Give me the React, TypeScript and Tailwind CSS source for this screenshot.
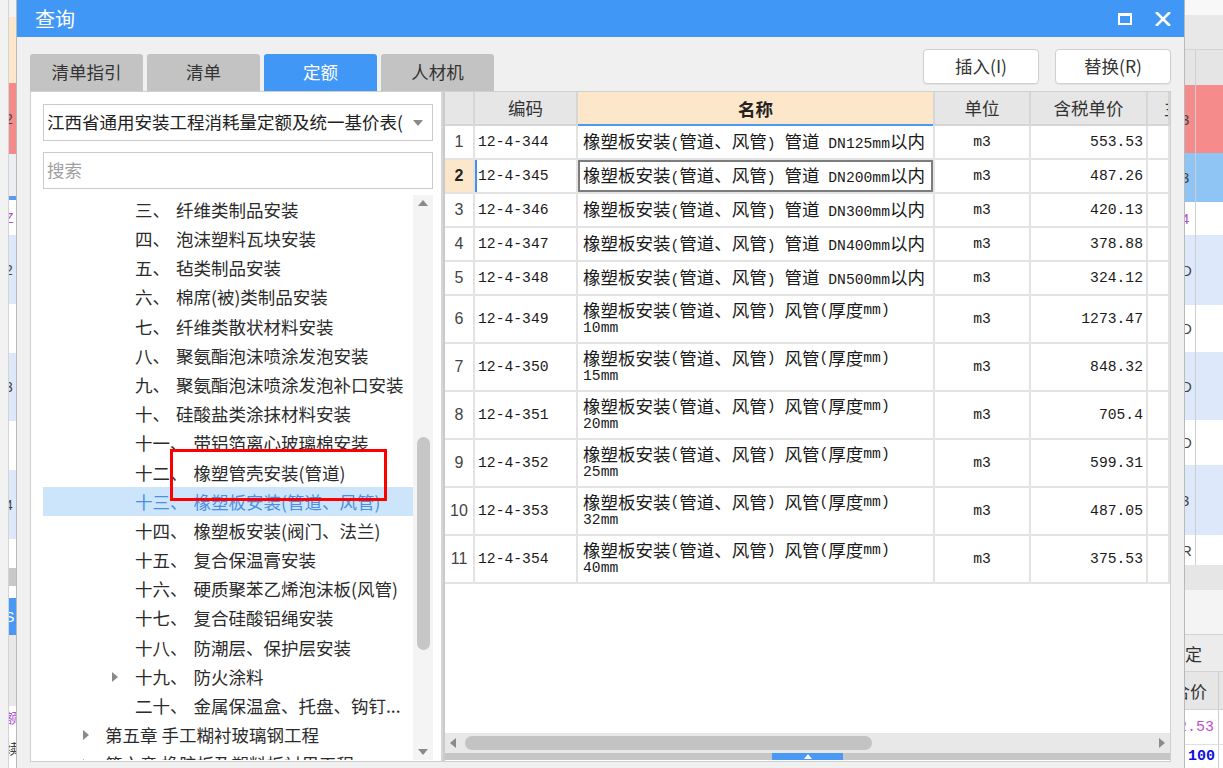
import React from 'react';

type Row = { code: string; name: string; sub?: string; unit: string; price: string };

const rows: Row[] = [
  { code: '12-4-344', name: '橡塑板安装(管道、风管) 管道 DN125mm以内', unit: 'm3', price: '553.53' },
  { code: '12-4-345', name: '橡塑板安装(管道、风管) 管道 DN200mm以内', unit: 'm3', price: '487.26' },
  { code: '12-4-346', name: '橡塑板安装(管道、风管) 管道 DN300mm以内', unit: 'm3', price: '420.13' },
  { code: '12-4-347', name: '橡塑板安装(管道、风管) 管道 DN400mm以内', unit: 'm3', price: '378.88' },
  { code: '12-4-348', name: '橡塑板安装(管道、风管) 管道 DN500mm以内', unit: 'm3', price: '324.12' },
  { code: '12-4-349', name: '橡塑板安装(管道、风管) 风管(厚度mm)', sub: '10mm', unit: 'm3', price: '1273.47' },
  { code: '12-4-350', name: '橡塑板安装(管道、风管) 风管(厚度mm)', sub: '15mm', unit: 'm3', price: '848.32' },
  { code: '12-4-351', name: '橡塑板安装(管道、风管) 风管(厚度mm)', sub: '20mm', unit: 'm3', price: '705.4' },
  { code: '12-4-352', name: '橡塑板安装(管道、风管) 风管(厚度mm)', sub: '25mm', unit: 'm3', price: '599.31' },
  { code: '12-4-353', name: '橡塑板安装(管道、风管) 风管(厚度mm)', sub: '32mm', unit: 'm3', price: '487.05' },
  { code: '12-4-354', name: '橡塑板安装(管道、风管) 风管(厚度mm)', sub: '40mm', unit: 'm3', price: '375.53' },
];

type TreeItem = { label?: string; text: string; chapter?: boolean; arrow?: boolean; selected?: boolean };

const tree: TreeItem[] = [
  { label: '三、', text: '纤维类制品安装' },
  { label: '四、', text: '泡沫塑料瓦块安装' },
  { label: '五、', text: '毡类制品安装' },
  { label: '六、', text: '棉席(被)类制品安装' },
  { label: '七、', text: '纤维类散状材料安装' },
  { label: '八、', text: '聚氨酯泡沫喷涂发泡安装' },
  { label: '九、', text: '聚氨酯泡沫喷涂发泡补口安装' },
  { label: '十、', text: '硅酸盐类涂抹材料安装' },
  { label: '十一、', text: '带铝箔离心玻璃棉安装' },
  { label: '十二、', text: '橡塑管壳安装(管道)' },
  { label: '十三、', text: '橡塑板安装(管道、风管)', selected: true },
  { label: '十四、', text: '橡塑板安装(阀门、法兰)' },
  { label: '十五、', text: '复合保温膏安装' },
  { label: '十六、', text: '硬质聚苯乙烯泡沫板(风管)' },
  { label: '十七、', text: '复合硅酸铝绳安装' },
  { label: '十八、', text: '防潮层、保护层安装' },
  { label: '十九、', text: '防火涂料', arrow: true },
  { label: '二十、', text: '金属保温盒、托盘、钩钉...' },
  { text: '第五章 手工糊衬玻璃钢工程', chapter: true, arrow: true },
  { text: '第六章 橡胶板及塑料板衬里工程', chapter: true, arrow: true },
];

// background app peeking out on the left
const leftBlocks = [
  { cls: 'h-[17px] bg-[#f3f3f3]' },
  { cls: 'h-[66px] bg-[#fde7cc]' },
  { cls: 'h-[71px] bg-[#f48a8a]', t: '2' },
  { cls: 'h-[42px] bg-[#eceef3]', t: '·' },
  { cls: 'h-[4px] bg-[#5a9bf0]' },
  { cls: 'h-[35px] bg-white', t: 'Z', c: 'text-[#b04fd0]' },
  { cls: 'h-[69px] bg-[#dde9fb]', t: '2' },
  { cls: 'h-[49px] bg-white' },
  { cls: 'h-[68px] bg-[#dde9fb]', t: '3' },
  { cls: 'h-[49px] bg-white' },
  { cls: 'h-[69px] bg-[#dde9fb]', t: '4' },
  { cls: 'h-[29px] bg-white' },
  { cls: 'h-[18px] bg-[#c8c8c8]' },
  { cls: 'h-[12px] bg-white' },
  { cls: 'h-[37px] bg-[#4a98f5]', t: 'S', c: 'text-white' },
  { cls: 'h-[71px] bg-[#e8e8e8]' },
  { cls: 'h-[24px] bg-white', t: '额', c: 'text-[#b04fd0]' },
  { cls: 'flex-1 bg-white', t: '续' },
];

const rightBlocks = [
  { cls: 'h-[15px] bg-[#f8f8f8]' },
  { cls: 'h-[35px] bg-[#e8e8e8] border-b border-[#d4d4d4]' },
  { cls: 'h-[35px] bg-[#e5e5e5]', line: true },
  { cls: 'h-[68px] bg-[#f68b8b]', line: true, t: '3' },
  { cls: 'h-[49px] bg-[#8fc5f5]', line: true, t: '3' },
  { cls: 'h-[33px] bg-white', line: true, t: '4', c: 'text-[#b04fd0]' },
  { cls: 'h-[70px] bg-[#dde9fb]', line: true, t: 'D' },
  { cls: 'h-[47px] bg-white', line: true, t: 'D' },
  { cls: 'h-[68px] bg-[#dde9fb]', line: true, t: 'D' },
  { cls: 'h-[45px] bg-white', line: true, t: 'D' },
  { cls: 'h-[70px] bg-[#dde9fb]', line: true, t: '3' },
  { cls: 'h-[30px] bg-white', line: true, t: 'R' },
  { cls: 'h-[25px] bg-[#e6e6e6]' },
  { cls: 'h-[45px] bg-[#f4f4f4] border-b border-[#d4d4d4]' },
];

function Mixed({ text }: { text: string }) {
  const parts = text.split(/([\x20-\x7e]+)/).filter(Boolean);
  return (
    <>
      {parts.map((p, i) =>
        /^[\x20-\x7e]+$/.test(p) ? (
          <span key={i} className="font-['Liberation_Mono',monospace] text-[14.7px] whitespace-pre">{p}</span>
        ) : (
          <span key={i}>{p}</span>
        )
      )}
    </>
  );
}

function Caret({ dir }: { dir: 'up' | 'down' | 'left' | 'right' }) {
  const pts = {
    up: '0,6 5,0 10,6',
    down: '0,0 10,0 5,6',
    left: '6,0 6,10 0,5',
    right: '0,0 6,5 0,10',
  }[dir];
  const vb = dir === 'up' || dir === 'down' ? '0 0 10 6' : '0 0 6 10';
  const size = dir === 'up' || dir === 'down' ? 'w-[10px] h-[6px]' : 'w-[6px] h-[10px]';
  return (
    <svg viewBox={vb} className={size}>
      <polygon points={pts} fill="#8a8a8a" />
    </svg>
  );
}

function LeftStrip() {
  return (
    <div className="w-[16px] shrink-0 flex">
      <div className="w-[9px] bg-[#f2f2f2] border-r border-[#d4d4d4]" />
      <div className="w-[7px] flex flex-col">
        {leftBlocks.map((b, i) => (
          <div key={i} className={`${b.cls} flex items-center overflow-hidden`}>
            {b.t && (
              <span className={`-ml-[4px] text-[14px] leading-none font-['Liberation_Sans','Noto_Sans_CJK_SC',sans-serif] ${b.c ?? 'text-[#444]'}`}>
                {b.t}
              </span>
            )}
          </div>
        ))}
      </div>
    </div>
  );
}

function RightStrip() {
  return (
    <div className="w-[38px] shrink-0 flex flex-col bg-white">
      {rightBlocks.map((b, i) => (
        <div key={i} className={`${b.cls} flex`}>
          <div className={`w-[11px] flex items-center overflow-hidden ${b.line ? 'border-r border-[#cfcfcf]' : ''}`}>
            {b.t && (
              <span className={`-ml-[4px] text-[15px] leading-none font-['Liberation_Sans',sans-serif] ${b.c ?? 'text-[#444]'}`}>
                {b.t}
              </span>
            )}
          </div>
          <div className="flex-1" />
        </div>
      ))}
      <div className="h-[37px] bg-[#ececec] flex items-center border-b border-[#d4d4d4]">
        <span className="text-[17px] text-[#333] leading-none">定</span>
      </div>
      <div className="h-[38px] bg-[#e6e6e6] flex items-center overflow-hidden border-b border-[#d4d4d4]">
        <span className="-ml-[12px] text-[17px] text-[#333] leading-none whitespace-nowrap">合价</span>
        <div className="ml-auto h-full border-l border-[#cfcfcf] w-[5px]" />
      </div>
      <div className="h-[35px] bg-white flex items-center overflow-hidden border-b border-[#e0e0e0]">
        <span className="-ml-[7px] text-[15px] text-[#c04fd0] leading-none font-['Liberation_Mono',monospace] whitespace-nowrap">2.53</span>
        <div className="ml-auto h-full border-l border-[#cfcfcf] w-[5px]" />
      </div>
      <div className="flex-1 bg-white flex items-center overflow-hidden">
        <span className="ml-[3px] text-[15px] font-bold text-[#1010e0] leading-none font-['Liberation_Mono',monospace]">100</span>
        <div className="ml-auto h-full border-l border-[#cfcfcf] w-[5px]" />
      </div>
    </div>
  );
}

function TitleBar() {
  return (
    <div className="h-[37px] shrink-0 bg-[#4197f6] flex items-center pl-[18px] pr-[13px]">
      <span className="text-white text-[20px] leading-none">查询</span>
      <div className="ml-auto flex items-center gap-[23px]">
        <svg viewBox="0 0 14 12" className="w-[14px] h-[12px]">
          <rect x="1" y="1.5" width="12" height="9.5" fill="none" stroke="white" strokeWidth="2" />
          <rect x="0" y="0" width="14" height="3" fill="white" />
        </svg>
        <svg viewBox="0 0 16 14" className="w-[16px] h-[14px]">
          <path d="M2 1 L14 13 M14 1 L2 13" stroke="white" strokeWidth="2.6" strokeLinecap="square" />
        </svg>
      </div>
    </div>
  );
}

function Tabs() {
  const tabs = ['清单指引', '清单', '定额', '人材机'];
  return (
    <div className="flex gap-[4px]">
      {tabs.map((t) => (
        <div
          key={t}
          className={`w-[113px] h-[37px] rounded-t-[3px] flex items-center justify-center text-[17.5px] ${
            t === '定额' ? 'bg-[#4197f6] text-white' : 'bg-[#c3c3c3] text-[#333]'
          }`}
        >
          {t}
        </div>
      ))}
    </div>
  );
}

function TreePanel() {
  return (
    <div className="w-[412px] shrink-0 flex flex-col pl-[12px] pr-[8px] pt-[12px] pb-[1px] border-r-2 border-[#d6d6d6]">
      <div className="h-[37px] shrink-0 border border-[#cacaca] flex items-center bg-white">
        <div className="flex-1 overflow-hidden whitespace-nowrap pl-[3px] text-[17.5px] text-[#222]">
          江西省通用安装工程消耗量定额及统一基价表(2017)
        </div>
        <div className="w-[29px] flex items-center justify-center">
          <Caret dir="down" />
        </div>
      </div>
      <div className="mt-[11px] h-[37px] shrink-0 border border-[#cacaca] flex items-center pl-[3px] text-[17.5px] text-[#a0a0a0]">
        搜索
      </div>
      <div className="mt-[6px] flex-1 flex overflow-hidden">
        <div className="w-[370px] flex flex-col">
          {tree.map((it, i) => (
            <div
              key={i}
              className={`h-[29.2px] shrink-0 flex items-center whitespace-nowrap text-[17.5px] leading-none ${
                it.chapter ? 'pl-[40px]' : 'pl-[69px]'
              } ${it.selected ? 'bg-[#cce5fb] text-[#4a8fe3]' : 'text-[#2b2b2b]'}`}
            >
              <span className={`${it.chapter ? 'w-[22px]' : 'w-[23px]'} flex items-center`}>
                {it.arrow && <Caret dir="right" />}
              </span>
              {it.label && <span>{it.label}</span>}
              <span className={it.label ? 'ml-[6px]' : ''}>{it.text}</span>
            </div>
          ))}
        </div>
        <div className="w-[20px] flex flex-col items-center bg-[#f4f4f4]">
          <div className="h-[16px] flex items-center"><Caret dir="up" /></div>
          <div className="h-[226px]" />
          <div className="w-[13px] h-[213px] rounded-full bg-[#c6c6c6]" />
          <div className="flex-1" />
          <div className="h-[16px] flex items-center"><Caret dir="down" /></div>
        </div>
      </div>
    </div>
  );
}

function TablePanel() {
  const cell = 'border-r-2 border-b-2 border-[#e3e3e3]';
  const head = 'border-r-2 border-b-2 border-[#d6d6d6] bg-[#e6e6e6] flex items-center justify-center text-[17.5px] text-[#333]';
  return (
    <div className="flex-1 flex flex-col border-l-2 border-[#cacaca] min-w-0">
      <div className="grid grid-cols-[30px_103px_357px_96px_117px_1fr] overflow-hidden">
        <div className={`${head} h-[34px] bg-[#e0e0e0]`} />
        <div className={`${head} h-[34px]`}>编码</div>
        <div className="h-[34px] border-r-2 border-[#d6d6d6] bg-[#fde7ca] flex items-center justify-center text-[17.5px] font-bold text-[#222] shadow-[inset_0_-2px_0_#4a9af5]">
          名称
        </div>
        <div className={`${head} h-[34px]`}>单位</div>
        <div className={`${head} h-[34px]`}>含税单价</div>
        <div className={`${head} h-[34px] justify-start overflow-hidden`}>
          <span className="ml-[16px] whitespace-nowrap">主材</span>
        </div>

        {rows.map((r, i) => {
          const h = r.sub ? 'h-[48px]' : 'h-[34px]';
          const sel = i === 1;
          return (
            <React.Fragment key={r.code}>
              <div
                className={`${cell} ${h} flex items-center justify-center font-['Liberation_Sans',sans-serif] text-[16px] ${
                  sel ? 'bg-[#fde7ca] font-bold text-[#222]' : 'text-[#444]'
                }`}
              >
                {i + 1}
              </div>
              <div
                className={`${cell} ${h} flex items-center pl-[3px] text-[#1a1a1a] ${
                  sel ? 'shadow-[inset_2px_0_0_#4a90e2]' : ''
                }`}
              >
                <Mixed text={r.code} />
              </div>
              <div
                className={`${cell} ${h} flex flex-col justify-center pl-[5px] text-[17.5px] text-[#1a1a1a] whitespace-nowrap overflow-hidden leading-[18px] ${
                  sel ? 'shadow-[inset_0_0_0_2px_#7c7c7c]' : ''
                }`}
              >
                <div className={r.sub ? 'h-[18px] flex items-center' : ''}>
                  <Mixed text={r.name} />
                </div>
                {r.sub && (
                  <div className="h-[18px] flex items-center">
                    <Mixed text={r.sub} />
                  </div>
                )}
              </div>
              <div className={`${cell} ${h} flex items-center justify-center text-[#1a1a1a]`}>
                <Mixed text={r.unit} />
              </div>
              <div className={`${cell} ${h} flex items-center justify-end pr-[3px] text-[#1a1a1a]`}>
                <Mixed text={r.price} />
              </div>
              <div className={`${cell} ${h}`} />
            </React.Fragment>
          );
        })}
      </div>
      <div className="flex-1 bg-white" />
      <div className="h-[20px] shrink-0 bg-[#e8e8e8] flex items-center px-[3px]">
        <div className="w-[10px] flex justify-center"><Caret dir="left" /></div>
        <div className="ml-[7px] w-[407px] h-[14px] rounded-full bg-[#c3c3c3]" />
        <div className="flex-1" />
        <div className="w-[10px] flex justify-center"><Caret dir="right" /></div>
      </div>
      <div className="h-[7px] shrink-0 bg-[#c6c6c6] flex justify-center">
        <div className="w-[71px] h-full bg-[#4a9af5] flex items-center justify-center">
          <svg viewBox="0 0 8 5" className="w-[8px] h-[5px]">
            <polygon points="0,5 4,0 8,5" fill="white" />
          </svg>
        </div>
      </div>
      <div className="h-[1px] shrink-0 bg-white" />
    </div>
  );
}

export default function App() {
  return (
    <div className="relative w-[1223px] h-[768px] overflow-hidden flex bg-white font-['Noto_Sans_CJK_SC','Noto_Sans',sans-serif] text-[#333]">
      <LeftStrip />
      <div className="w-[1169px] shrink-0 flex flex-col bg-[#f0f0f0] border-l border-r border-[#b9b9b9]">
        <TitleBar />
        <div className="h-[54px] shrink-0 flex items-end justify-between px-[13px]">
          <Tabs />
          <div className="self-start mt-[12px] flex gap-[16px]">
            {['插入(I)', '替换(R)'].map((b) => (
              <div
                key={b}
                className="w-[116px] h-[35px] bg-white border border-[#cfcfcf] rounded-[4px] shadow-[0_1px_1px_rgba(0,0,0,0.06)] flex items-center justify-center text-[17.5px] text-[#333]"
              >
                {b}
              </div>
            ))}
          </div>
        </div>
        <div className="mx-[13px] h-[671px] shrink-0 flex bg-white border border-[#cfcfcf]">
          <TreePanel />
          <TablePanel />
        </div>
      </div>
      <RightStrip />
      <div className="absolute left-[170px] top-[449px] w-[217px] h-[52px] border-[3px] border-[#ff0000]" />
    </div>
  );
}
